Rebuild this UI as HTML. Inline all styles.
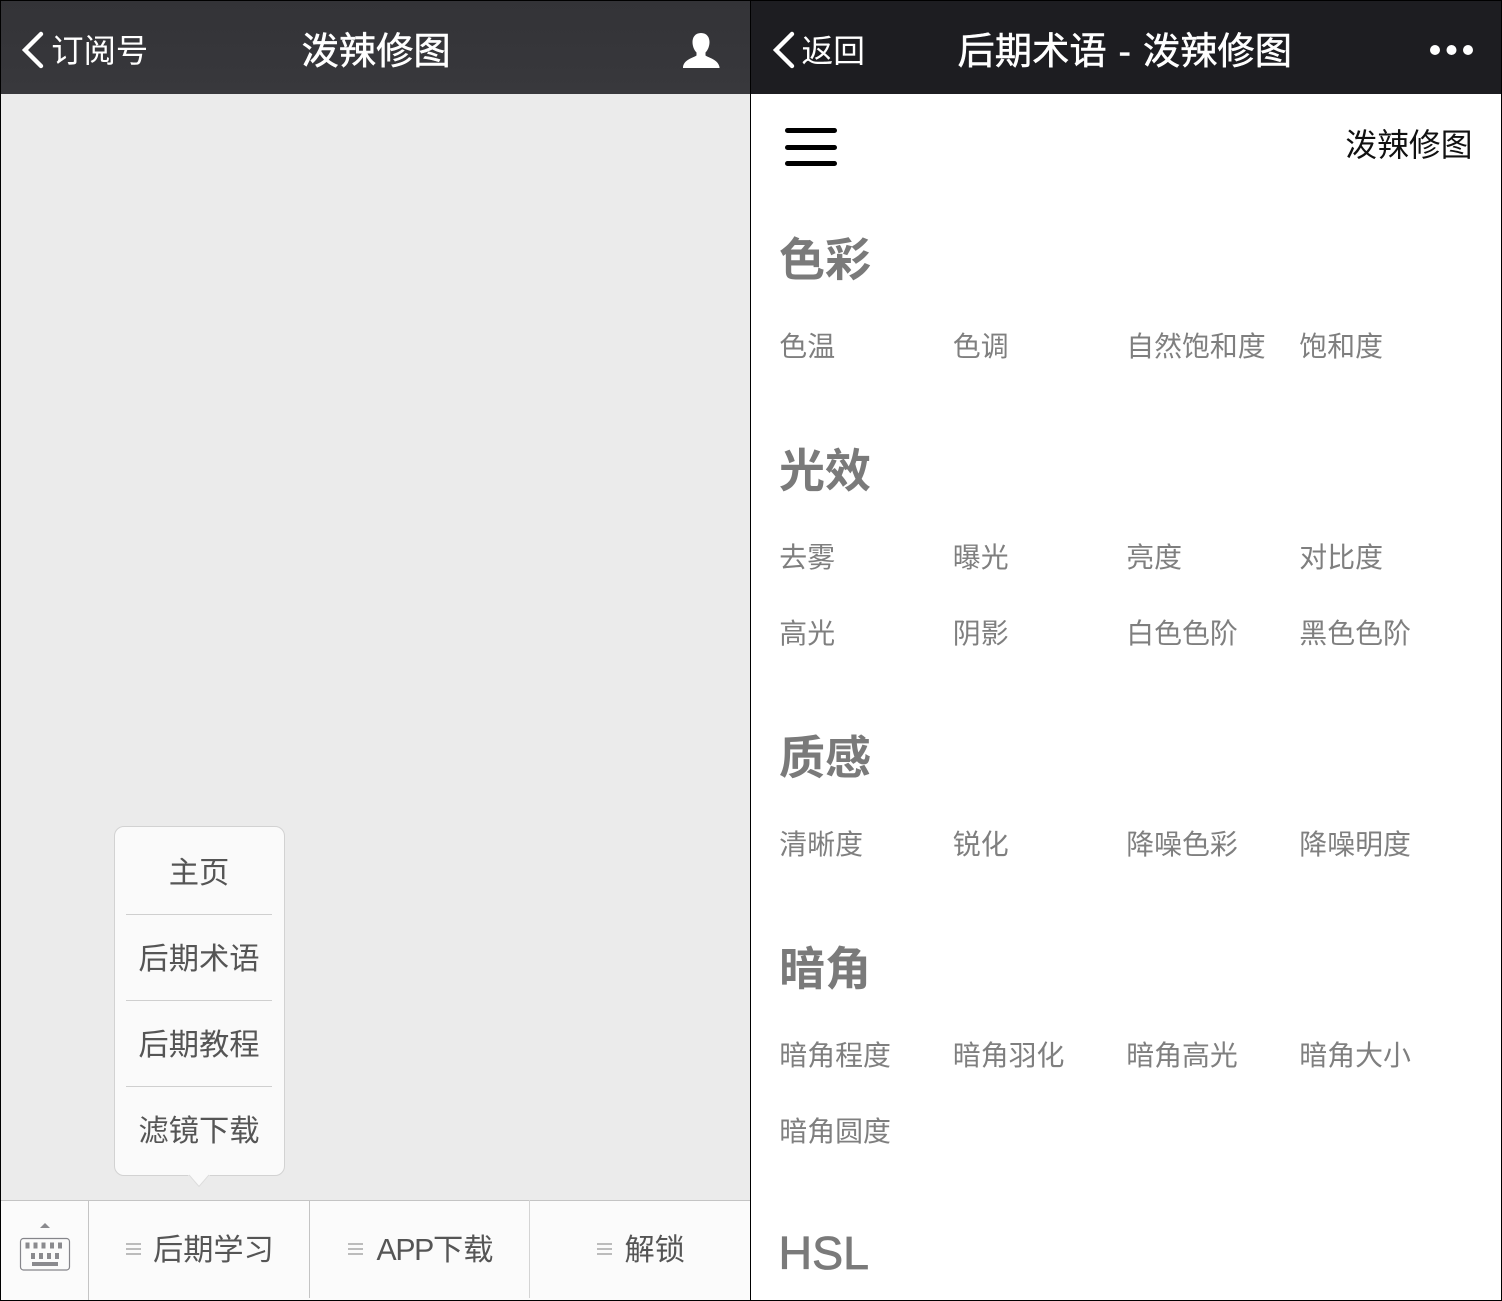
<!DOCTYPE html>
<html><head><meta charset="utf-8">
<style>
html,body{margin:0;padding:0;background:#000}
#p{position:relative;width:1502px;height:1301px;overflow:hidden;background:#000;font-family:"Liberation Sans","Noto Sans CJK SC",sans-serif}
#p div,#p svg{position:absolute}
.t{white-space:nowrap;line-height:1}
.h{font-size:46px;font-weight:bold;color:#7a7a7a;left:779px}
.l{font-size:27.900px;color:#7f7f7f}
.c1{left:779.300px}.c2{left:952.800px}.c3{left:1126.200px}.c4{left:1299.300px}
.m{font-size:30.300px;color:#555;left:113.500px;width:171px;text-align:center}
.s{left:126px;width:146px;height:1px;background:#cfcfcf}
.tb{font-size:30.200px;color:#555}
.i{width:15px;height:2px;background:#bcbcbc}
.b{-webkit-text-stroke:0.5px #fff}
</style></head><body><div id="p">

<div style="left:1px;top:1px;width:749px;height:93px;background:linear-gradient(#333337,#38383c)"></div>
<div style="left:1px;top:94px;width:749px;height:1206px;background:#ebebeb"></div>
<div style="left:751px;top:1px;width:750px;height:93px;background:#1d1d21"></div>
<div style="left:751px;top:94px;width:750px;height:1206px;background:#fff"></div>

<svg style="left:20px;top:31px" width="26" height="38" viewBox="0 0 26 38"><path d="M21 3 L5 19 L21 35" fill="none" stroke="#fff" stroke-width="4.4" stroke-linecap="round" stroke-linejoin="miter"/></svg>
<div class="t" style="left:51.300px;top:35px;font-size:32.300px;color:#fff">订阅号</div>
<div class="t b" style="left:301.500px;top:32.500px;font-size:37.300px;color:#fff">泼辣修图</div>
<svg style="left:682px;top:32px" width="38" height="37" viewBox="0 0 38 37"><path d="M19 1 C13 1 10.500 5.500 10.500 10 C10.500 14 12 18 14.500 20.500 L14.500 23.500 C11 26 2 27.500 1 35 L1 36 L37.500 36 L37.500 35 C36 27.500 27 26 23.500 23.500 L23.500 20.500 C26 18 27.500 14 27.500 10 C27.500 5.500 25 1 19 1 Z" fill="#fff"/></svg>

<svg style="left:771px;top:31px" width="26" height="38" viewBox="0 0 26 38"><path d="M21 3 L5 19 L21 35" fill="none" stroke="#fff" stroke-width="4.4" stroke-linecap="round"/></svg>
<div class="t" style="left:801.500px;top:36px;font-size:31.700px;color:#fff">返回</div>
<div class="t b" style="left:957.500px;top:32.500px;font-size:37.300px;word-spacing:1.500px;color:#fff">后期术语 - 泼辣修图</div>
<svg style="left:1428px;top:40px" width="48" height="20" viewBox="0 0 48 20"><circle cx="7" cy="10" r="5" fill="#fff"/><circle cx="23.500" cy="10" r="5" fill="#fff"/><circle cx="40" cy="10" r="5" fill="#fff"/></svg>

<div style="left:785px;top:128.300px;width:52px;height:5.200px;border-radius:3px;background:#000"></div>
<div style="left:785px;top:145px;width:52px;height:5.200px;border-radius:3px;background:#000"></div>
<div style="left:785px;top:161px;width:52px;height:5.200px;border-radius:3px;background:#000"></div>
<div class="t" style="left:1345.300px;top:130px;font-size:31.800px;color:#111">泼辣修图</div>

<div class="t h" style="top:236.500px">色彩</div>
<div class="t l c1" style="top:333px">色温</div>
<div class="t l c2" style="top:333px">色调</div>
<div class="t l c3" style="top:333px">自然饱和度</div>
<div class="t l c4" style="top:333px">饱和度</div>

<div class="t h" style="top:447.500px">光效</div>
<div class="t l c1" style="top:544px">去雾</div>
<div class="t l c2" style="top:544px">曝光</div>
<div class="t l c3" style="top:544px">亮度</div>
<div class="t l c4" style="top:544px">对比度</div>
<div class="t l c1" style="top:620px">高光</div>
<div class="t l c2" style="top:620px">阴影</div>
<div class="t l c3" style="top:620px">白色色阶</div>
<div class="t l c4" style="top:620px">黑色色阶</div>

<div class="t h" style="top:734.500px">质感</div>
<div class="t l c1" style="top:831px">清晰度</div>
<div class="t l c2" style="top:831px">锐化</div>
<div class="t l c3" style="top:831px">降噪色彩</div>
<div class="t l c4" style="top:831px">降噪明度</div>

<div class="t h" style="top:945.500px">暗角</div>
<div class="t l c1" style="top:1042px">暗角程度</div>
<div class="t l c2" style="top:1042px">暗角羽化</div>
<div class="t l c3" style="top:1042px">暗角高光</div>
<div class="t l c4" style="top:1042px">暗角大小</div>
<div class="t l c1" style="top:1118px">暗角圆度</div>

<div class="t" style="left:778.500px;top:1230px;font-size:46.500px;color:#7a7a7a;-webkit-text-stroke:0.8px #7a7a7a">HSL</div>

<div style="left:113.500px;top:826px;width:169.500px;height:348px;background:#fafafa;border:1px solid #d2d2d2;border-radius:10px"></div>
<svg style="left:188px;top:1174px" width="22" height="13" viewBox="0 0 22 13"><path d="M0 1 H22 L11 13 Z" fill="#fafafa"/><path d="M1 1 L11 12.500 L21 1" fill="none" stroke="#dcdcdc" stroke-width="1"/><path d="M2 0 H20 V1 L11 11 L2 1 Z" fill="#fafafa"/></svg>
<div class="t m" style="top:859px">主页</div>
<div class="s" style="top:914px"></div>
<div class="t m" style="top:945px">后期术语</div>
<div class="s" style="top:1000px"></div>
<div class="t m" style="top:1031px">后期教程</div>
<div class="s" style="top:1086px"></div>
<div class="t m" style="top:1117px">滤镜下载</div>

<div style="left:1px;top:1200px;width:749px;height:100px;background:#fbfbfb"></div>
<div style="left:1px;top:1200px;width:749px;height:1px;background:#c4c4c4"></div>
<div style="left:88px;top:1200px;width:1px;height:100px;background:#c4c4c4"></div>
<div style="left:309px;top:1200px;width:1px;height:98px;background:#c4c4c4"></div>
<div style="left:529px;top:1200px;width:1px;height:98px;background:#d4d4d4"></div>

<svg style="left:19px;top:1220px" width="52" height="52" viewBox="0 0 52 52">
<path d="M21 8 L26 3 L31 8 Z" fill="#8a8a8e"/>
<rect x="1.500" y="18.500" width="49" height="31.500" rx="3" fill="#fbfbfb" stroke="#85858a" stroke-width="1.200"/>
<g fill="#8a8a8e">
<rect x="6.500" y="22.500" width="4" height="6"/><rect x="14.500" y="22.500" width="4" height="6"/><rect x="22.500" y="22.500" width="4" height="6"/><rect x="31" y="22.500" width="4" height="6"/><rect x="39" y="22.500" width="4" height="6"/>
<rect x="12" y="33" width="4" height="6"/><rect x="20" y="33" width="4" height="6"/><rect x="28" y="33" width="4" height="6"/><rect x="36" y="33" width="4" height="6"/>
<rect x="13" y="42" width="26" height="4"/>
</g></svg>

<div class="i" style="left:126px;top:1243px"></div><div class="i" style="left:126px;top:1248px"></div><div class="i" style="left:126px;top:1253px"></div>
<div class="t tb" style="left:153px;top:1235.500px">后期学习</div>

<div class="i" style="left:348px;top:1243px"></div><div class="i" style="left:348px;top:1248px"></div><div class="i" style="left:348px;top:1253px"></div>
<div class="t tb" style="left:376.500px;top:1235.500px"><span style="letter-spacing:-1.300px">APP</span>下载</div>

<div class="i" style="left:597px;top:1243px"></div><div class="i" style="left:597px;top:1248px"></div><div class="i" style="left:597px;top:1253px"></div>
<div class="t tb" style="left:624.500px;top:1235.500px">解锁</div>

</div></body></html>
